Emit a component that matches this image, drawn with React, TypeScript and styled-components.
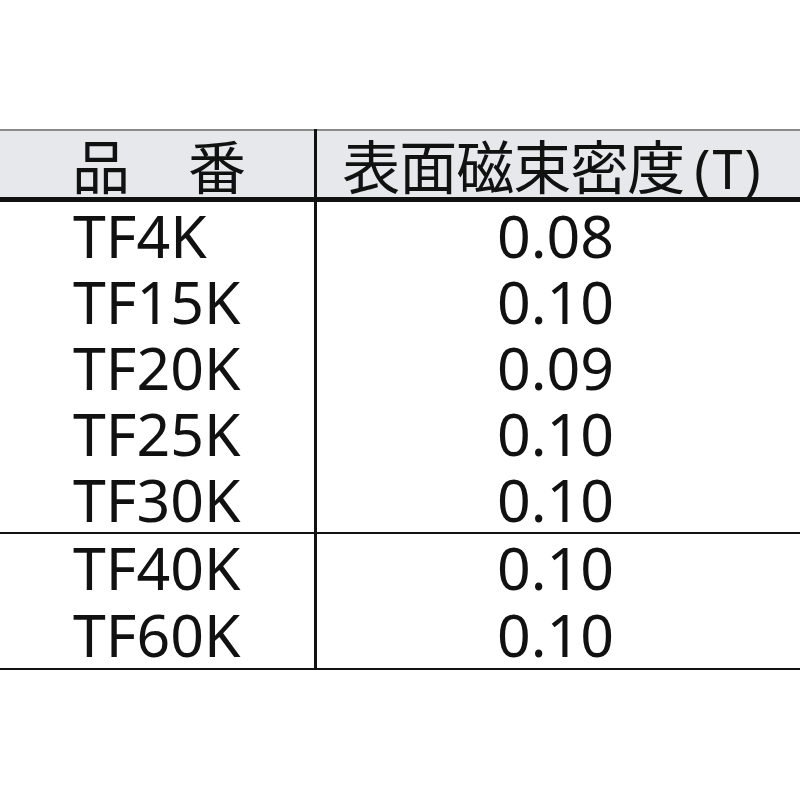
import React from 'react';
import styled, { createGlobalStyle } from 'styled-components';

const GlobalStyle = createGlobalStyle`
  html, body {
    margin: 0;
    padding: 0;
    background: #ffffff;
  }
  body {
    font-family: "Noto Sans", "Noto Sans CJK JP", sans-serif;
    color: #111;
  }
`;

const Page = styled.div`
  width: 800px;
  height: 800px;
  padding-top: 129px;
  box-sizing: border-box;
  background: #fff;
`;

const Table = styled.table`
  width: 800px;
  border-collapse: collapse;
  table-layout: fixed;
  border-top: 2px solid #8a8a8a;
  border-bottom: 2px solid #111;
`;

const HeaderRow = styled.tr`
  background: #e6e8eb;
  border-bottom: 5px solid #111;
`;

const HeaderCell = styled.th<{ $first?: boolean }>`
  height: 66px;
  padding: ${({ $first }) => ($first ? '0 0 0 4px' : '0 12px 0 0')};
  font-family: "Noto Sans CJK JP", "Noto Sans", sans-serif;
  font-weight: 400;
  font-size: 58px;
  line-height: 66px;
  text-align: center;
  white-space: nowrap;
  border-right: ${({ $first }) => ($first ? '3px solid #111' : 'none')};
  width: ${({ $first }) => ($first ? '310px' : 'auto')};
  letter-spacing: ${({ $first }) => ($first ? '0' : '-1px')};
`;

const Unit = styled.span`
  font-family: "Noto Sans", sans-serif;
  font-size: 54px;
  line-height: 0;
  letter-spacing: 2px;
  margin-left: 10px;
`;

const Row = styled.tr<{ $groupEnd?: boolean }>`
  border-bottom: ${({ $groupEnd }) => ($groupEnd ? '2px solid #111' : 'none')};
`;

const NameCell = styled.td<{ $tall?: boolean }>`
  height: ${({ $tall }) => ($tall ? '67px' : '66px')};
  padding: 0 0 0 73px;
  font-size: 59px;
  line-height: ${({ $tall }) => ($tall ? '67px' : '66px')};
  border-right: 3px solid #111;
  white-space: nowrap;
`;

const ValueCell = styled.td<{ $tall?: boolean }>`
  height: ${({ $tall }) => ($tall ? '67px' : '66px')};
  padding: 0 6px 0 0;
  font-size: 59px;
  line-height: ${({ $tall }) => ($tall ? '67px' : '66px')};
  text-align: center;
  white-space: nowrap;
`;

const rows = [
  { name: 'TF4K', value: '0.08', group: 1 },
  { name: 'TF15K', value: '0.10', group: 1 },
  { name: 'TF20K', value: '0.09', group: 1 },
  { name: 'TF25K', value: '0.10', group: 1 },
  { name: 'TF30K', value: '0.10', group: 1, end: true },
  { name: 'TF40K', value: '0.10', group: 2 },
  { name: 'TF60K', value: '0.10', group: 2 },
];

export default function App() {
  return (
    <Page>
      <GlobalStyle />
      <Table>
        <thead>
          <HeaderRow>
            <HeaderCell $first>品　番</HeaderCell>
            <HeaderCell>
              表面磁束密度<Unit>(T)</Unit>
            </HeaderCell>
          </HeaderRow>
        </thead>
        <tbody>
          {rows.map((r) => (
            <Row key={r.name} $groupEnd={r.end}>
              <NameCell $tall={r.group === 2}>{r.name}</NameCell>
              <ValueCell $tall={r.group === 2}>{r.value}</ValueCell>
            </Row>
          ))}
        </tbody>
      </Table>
    </Page>
  );
}
